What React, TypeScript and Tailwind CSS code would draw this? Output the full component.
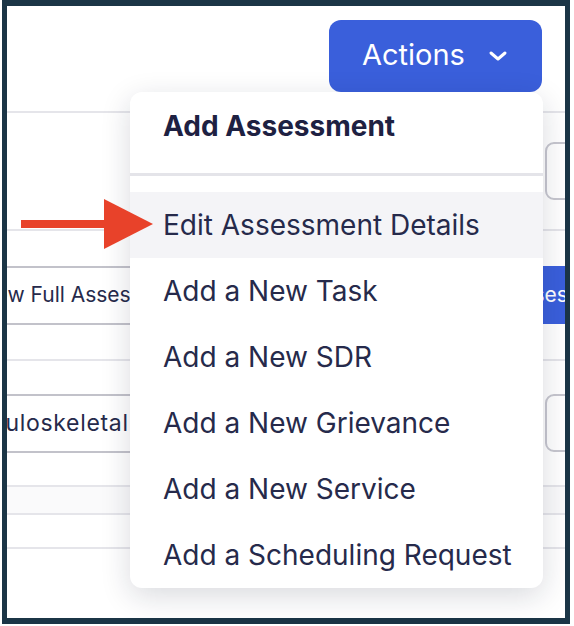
import { ReactNode } from "react";

const menuItems = [
  "Edit Assessment Details",
  "Add a New Task",
  "Add a New SDR",
  "Add a New Grievance",
  "Add a New Service",
  "Add a Scheduling Request",
];

function Row({
  className,
  children,
}: {
  className: string;
  children?: ReactNode;
}) {
  return (
    <div className={`flex items-center border-b-2 border-[#e5e5ea] ${className}`}>
      {children}
    </div>
  );
}

function ActionsMenu() {
  return (
    <div className="absolute left-[130px] top-[92px] w-[413px] rounded-[12px] bg-white shadow-[0_8px_30px_rgba(20,24,50,0.16)] overflow-hidden">
      <div className="h-[81px] flex items-center px-[33px] pb-[14px] text-[28px] font-bold text-[#1e2142] whitespace-nowrap">
        Add Assessment
      </div>
      <div className="h-[3px] bg-[#e4e4e9]" />
      <div className="pt-[16px]">
        {menuItems.map((label, i) => (
          <div
            key={label}
            className={`h-[66px] flex items-center px-[33px] text-[28px] text-[#262a4b] whitespace-nowrap ${
              i === 0 ? "bg-[#f4f4f7]" : ""
            }`}
          >
            {label}
          </div>
        ))}
      </div>
    </div>
  );
}

export default function App() {
  return (
    <div className="relative w-[574px] h-[626px] bg-white overflow-hidden font-['Inter',sans-serif]">
      {/* page frame */}
      <div className="ml-[2px] w-[568px] h-[624px] border-x-[5px] border-y-[6px] border-[#1b3546] overflow-hidden">
        <div className="h-[107px] flex justify-end items-start border-b-2 border-[#e5e5ea]">
          <button className="mt-[14px] mr-[23px] w-[213px] h-[72px] rounded-[12px] bg-[#3a5fdb] text-white flex items-center pl-[33px] pb-[3px] text-[29px]">
            Actions
            <svg width="20" height="12" viewBox="0 0 20 12" className="ml-[23px] mt-[2px]">
              <polyline
                points="3,3 10,9 17,3"
                fill="none"
                stroke="white"
                strokeWidth="3"
                strokeLinecap="round"
                strokeLinejoin="round"
              />
            </svg>
          </button>
        </div>

        <Row className="h-[118px] justify-end">
          <button className="shrink-0 -mr-[100px] w-[120px] h-[58px] rounded-[9px] border-2 border-[#c7c7cf] text-[21px] text-[#262a4b] text-left pl-[20px] whitespace-nowrap">
            Complete
          </button>
        </Row>

        <Row className="h-[130px] justify-between">
          <button className="shrink-0 -ml-[60px] w-[260px] h-[59px] border-y-2 border-[#c2c2ca] text-[21px] text-[#262a4b] text-left pl-[29px] whitespace-nowrap">
            View Full Assessment
          </button>
          <button className="shrink-0 -mr-[60px] w-[150px] h-[58px] rounded-[9px] bg-[#3a5fdb] text-[21px] text-white text-left pl-[10px] whitespace-nowrap">
            Reassess
          </button>
        </Row>

        <Row className="h-[126px] justify-between">
          <button className="shrink-0 -ml-[80px] w-[280px] h-[59px] border-y-2 border-[#c2c2ca] text-[23px] tracking-[0.03em] text-[#262a4b] text-left pl-[16px] whitespace-nowrap">
            Musculoskeletal
          </button>
          <button className="shrink-0 -mr-[100px] w-[120px] h-[58px] rounded-[9px] border-2 border-[#c7c7cf] text-[21px] text-[#262a4b] text-left pl-[20px] whitespace-nowrap">
            Generate
          </button>
        </Row>

        <Row className="h-[28px] bg-[#fafafb]" />
        <Row className="h-[34px]" />
      </div>

      <ActionsMenu />

      {/* pointer arrow */}
      <svg
        className="absolute left-0 top-0"
        width="574"
        height="626"
        viewBox="0 0 574 626"
      >
        <rect x="21" y="220" width="86" height="8" fill="#e8422a" />
        <polygon points="104,199 153,224 104,249" fill="#e8422a" />
      </svg>
    </div>
  );
}
